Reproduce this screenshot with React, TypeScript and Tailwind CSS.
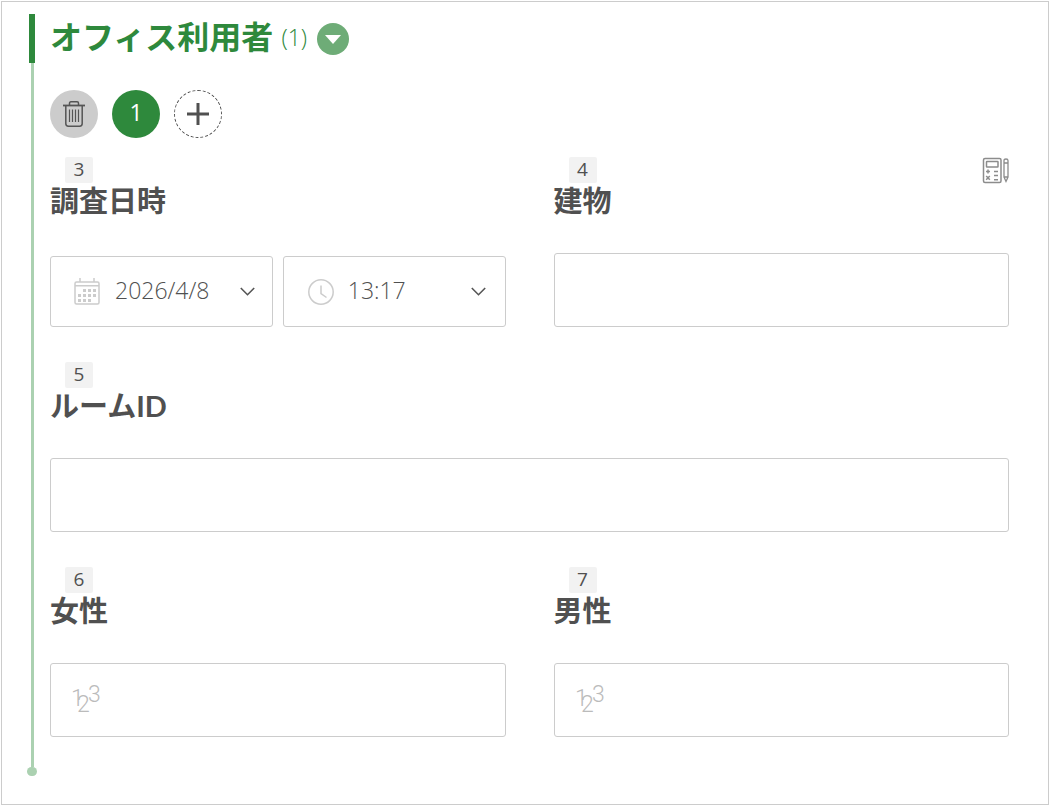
import { useState } from "react";
import type { ReactNode } from "react";

function TrashIcon() {
  return (
    <svg width="24" height="28" viewBox="0 0 24 28" fill="none" stroke="#555" strokeWidth="1.5" aria-hidden="true">
      <path d="M1 5.5h22" strokeWidth="1.8" />
      <path d="M7.5 5V3.2c0-.8.5-1.4 1.4-1.4h6.2c.9 0 1.4.6 1.4 1.4V5" />
      <path d="M3.8 6v17.6c0 1.6 1 2.6 2.6 2.6h11.2c1.6 0 2.6-1 2.6-2.6V6" />
      <path d="M7.5 9.5v12.5M10.5 9.5v12.5M13.5 9.5v12.5M16.5 9.5v12.5" strokeWidth="1.2" />
    </svg>
  );
}

function CalendarIcon() {
  const dots = [
    [10, 12], [15, 12], [20, 12],
    [5, 17], [10, 17], [15, 17], [20, 17],
    [5, 22], [10, 22], [15, 22],
  ];
  return (
    <svg width="26" height="27" viewBox="0 0 26 27" className="shrink-0" fill="none" stroke="#ccc" aria-hidden="true">
      <rect x="1" y="4" width="24" height="22" rx="1.5" strokeWidth="1.5" />
      <path d="M1 7.8h24M6 0v4M20 0v4" strokeWidth="1.5" />
      {dots.map(([x, y]) => (
        <rect key={`${x}-${y}`} x={x - 1} y={y - 1} width="3" height="3" fill="#ccc" stroke="none" />
      ))}
    </svg>
  );
}

function ClockIcon() {
  return (
    <svg width="26" height="26" viewBox="0 0 26 26" className="shrink-0" fill="none" stroke="#ccc" strokeWidth="1.5" aria-hidden="true">
      <circle cx="13" cy="13" r="12.2" />
      <path d="M13 6.5v8l5.5 4" />
    </svg>
  );
}

function ChevronIcon() {
  return (
    <svg width="15" height="9" viewBox="0 0 15 9" className="pointer-events-none shrink-0" fill="none" stroke="#555" strokeWidth="1.6" aria-hidden="true">
      <path d="M0.8 1l6.7 6.7L14.2 1" />
    </svg>
  );
}

function CalculatorIcon() {
  return (
    <svg width="27" height="27" viewBox="0 0 27 27" fill="none" stroke="#8c8c8c" strokeWidth="1.5" aria-hidden="true">
      <rect x="1.5" y="1.5" width="17.5" height="24" rx="1.5" />
      <rect x="4.5" y="4.5" width="11.5" height="5.5" rx="0.5" />
      <path d="M4 14.5h4M6 12.5v4M12 14.5h4" />
      <path d="M4.2 19l3.6 3.8M7.8 19l-3.6 3.8M12 18.5h4M12 22.8h4" />
      <path d="M22 3.5c0-1 .6-1.5 2-1.5s2 .5 2 1.5V20l-2 4.5-2-4.5zM22 6h4M22 20h4" strokeWidth="1.3" />
    </svg>
  );
}

function NumberIcon() {
  return (
    <svg width="36" height="44" viewBox="0 0 36 44" className="shrink-0 font-['Roboto',sans-serif] text-[23px] font-light" fill="#bbb" aria-hidden="true">
      <text x="2" y="28">1</text>
      <text x="8" y="34">2</text>
      <text x="19" y="24">3</text>
    </svg>
  );
}

type FieldProps = {
  no: number;
  label: string;
  htmlFor: string;
  action?: ReactNode;
  className?: string;
  children: ReactNode;
};

function Field({ no, label, htmlFor, action, className = "", children }: FieldProps) {
  return (
    <div className={`flex min-w-0 flex-col ${className}`}>
      <div className="flex h-[26px] items-start justify-between">
        <span className="ml-[15px] flex h-[26px] w-7 items-center justify-center rounded-xs bg-[#f2f2f2] pb-0.5 font-['Open_Sans',sans-serif] text-[19px]">
          {no}
        </span>
        {action}
      </div>
      <label htmlFor={htmlFor} className="text-[29px] leading-9 font-bold">
        {label}
      </label>
      <div className="mt-[34px] flex h-[74px] items-end">{children}</div>
    </div>
  );
}

const box = "rounded-[3px] border border-[#ccc] bg-white font-['Open_Sans','Noto_Sans_CJK_JP',sans-serif] text-[23px]";

function NumberInput({ id }: { id: string }) {
  return (
    <div className={`flex h-full w-full items-center gap-2 pr-4 pl-[18px] ${box}`}>
      <NumberIcon />
      <input id={id} inputMode="numeric" className="h-full min-w-0 flex-1 outline-none" />
    </div>
  );
}

export default function App() {
  const [open, setOpen] = useState(true);

  return (
    <main className="m-px flex min-h-[804px] border border-[#ccc] bg-white pt-3 pr-[39px] pb-7 pl-[25px] font-['Lato','Noto_Sans_CJK_JP',sans-serif] text-[#505050]">
      <div className="flex w-[10px] shrink-0 flex-col items-center">
        <div className="h-[49px] w-[6px] bg-[#2e893c]" />
        <div className="w-[3px] flex-1 bg-[#abd1b1]" />
        <div className="h-[9px] w-[10px] rounded-full bg-[#abd1b1]" />
      </div>

      <section className="ml-[13px] min-w-0 flex-1">
        <header className="flex h-[49px] items-center text-[#2e893c]">
          <h1 className="pb-[3px] text-[32px] leading-[48px] font-bold">オフィス利用者</h1>
          <span className="ml-2 pb-[3px] font-['Open_Sans',sans-serif] text-[23px] font-light">(1)</span>
          <button
            type="button"
            aria-label="開閉"
            aria-expanded={open}
            onClick={() => setOpen(!open)}
            className="ml-[10px] flex size-8 items-center justify-center rounded-full bg-[#6eac77]"
          >
            <svg width="16" height="10" viewBox="0 0 16 10" fill="#fff" aria-hidden="true">
              <path d="M0 1h16L8 10z" />
            </svg>
          </button>
        </header>

        {open && (
          <>
            <div className="mt-[27px] flex gap-[14px]">
              <button type="button" aria-label="削除" className="flex size-12 items-center justify-center rounded-full bg-[#ccc]">
                <TrashIcon />
              </button>
              <button type="button" className="size-12 rounded-full bg-[#2e893c] pb-1 font-['Open_Sans',sans-serif] text-[23px] text-white">
                1
              </button>
              <button type="button" aria-label="追加" className="flex size-12 items-center justify-center rounded-full border border-dashed border-[#505050]">
                <svg width="24" height="24" viewBox="0 0 24 24" stroke="#505050" strokeWidth="3" aria-hidden="true">
                  <path d="M12 1v22M1 12h22" />
                </svg>
              </button>
            </div>

            <div className="mt-[19px] grid grid-cols-2 gap-x-12 gap-y-[35px]">
              <Field no={3} label="調査日時" htmlFor="date">
                <div className="grid w-full grid-cols-2 gap-[10px]">
                  <div className={`flex h-[71px] items-center pr-[17px] pl-[23px] ${box}`}>
                    <CalendarIcon />
                    <select id="date" className="ml-[15px] w-0 min-w-0 flex-1 appearance-none pb-[3px] font-light outline-none">
                      <option>2026/4/8</option>
                    </select>
                    <ChevronIcon />
                  </div>
                  <div className={`flex h-[71px] items-center pr-[19px] pl-6 ${box}`}>
                    <ClockIcon />
                    <select aria-label="時刻" className="ml-[14px] w-0 min-w-0 flex-1 appearance-none pb-[3px] font-light outline-none">
                      <option>13:17</option>
                    </select>
                    <ChevronIcon />
                  </div>
                </div>
              </Field>
              <Field no={4} label="建物" htmlFor="building" action={<CalculatorIcon />}>
                <input id="building" className={`h-full w-full px-6 outline-none ${box}`} />
              </Field>
              <Field no={5} label="ルームID" htmlFor="room" className="col-span-2">
                <input id="room" className={`h-full w-full px-6 outline-none ${box}`} />
              </Field>
              <Field no={6} label="女性" htmlFor="female">
                <NumberInput id="female" />
              </Field>
              <Field no={7} label="男性" htmlFor="male">
                <NumberInput id="male" />
              </Field>
            </div>
          </>
        )}
      </section>
    </main>
  );
}
